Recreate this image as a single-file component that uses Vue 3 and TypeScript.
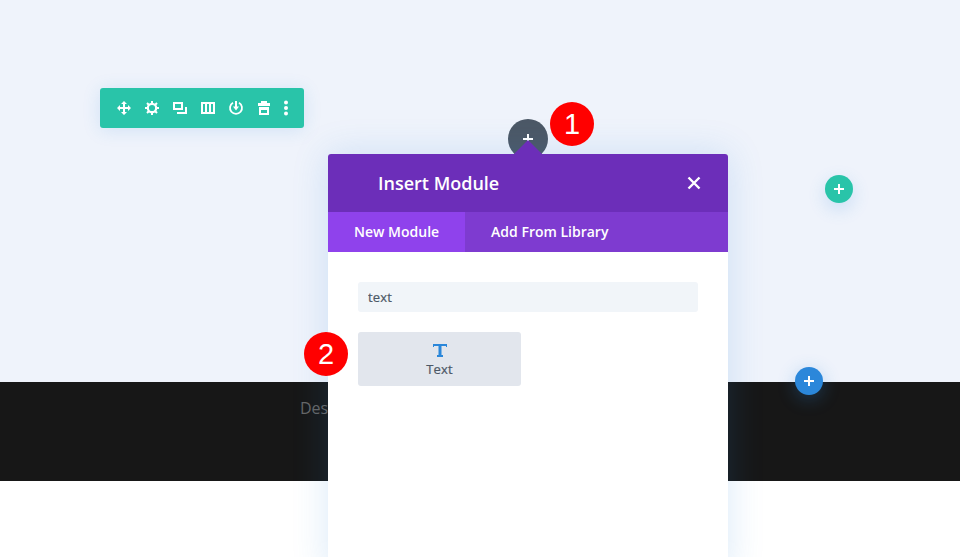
<template>
  <div class="page">
    <section class="hero">
      <div class="toolbar">
        <button class="tool">
          <svg viewBox="0 0 16 16"><path d="M8 1 11 4H9V7H12V5L15 8 12 11V9H9V12H11L8 15 5 12H7V9H4V11L1 8 4 5V7H7V4H5Z" fill="#fff" /></svg>
        </button>
        <button class="tool">
          <svg viewBox="0 0 16 16">
            <circle cx="8" cy="8" r="4.2" fill="none" stroke="#fff" stroke-width="2.2" />
            <path d="M8 1V4M8 12V15M1 8H4M12 8H15M3 3 5 5M11 11 13 13M3 13 5 11M11 5 13 3" stroke="#fff" stroke-width="2" />
          </svg>
        </button>
        <button class="tool">
          <svg viewBox="0 0 16 16"><path d="M2 3H10V9H2ZM14 7V13H5" fill="none" stroke="#fff" stroke-width="2" /></svg>
        </button>
        <button class="tool">
          <svg viewBox="0 0 16 16"><path d="M2 3H14V13H2ZM6 3V13M10 3V13" fill="none" stroke="#fff" stroke-width="2" /></svg>
        </button>
        <button class="tool">
          <svg viewBox="0 0 16 16">
            <path d="M5 2.7A6 6 0 1 0 11 2.7" fill="none" stroke="#fff" stroke-width="1.8" />
            <path d="M7 1H9V6.5H11L8 10.5 5 6.5H7Z" fill="#fff" />
          </svg>
        </button>
        <button class="tool">
          <svg viewBox="0 0 16 16"><path d="M5 3V1H11V3H14V6H2V3ZM3 7H13V15H3ZM5 10V13H11V10Z" fill="#fff" fill-rule="evenodd" /></svg>
        </button>
        <button class="tool tool-more">
          <svg viewBox="0 0 16 16"><circle cx="8" cy="2.5" r="2" fill="#fff" /><circle cx="8" cy="8" r="2" fill="#fff" /><circle cx="8" cy="13.5" r="2" fill="#fff" /></svg>
        </button>
      </div>
    </section>

    <footer class="band">
      <p class="credit">Designed by Elegant Themes | Powered by WordPress</p>
    </footer>

    <button class="add add-dark"><span class="plus"></span></button>
    <button class="add add-green"><span class="plus"></span></button>
    <button class="add add-blue"><span class="plus"></span></button>

    <div class="modal">
      <span class="arrow"></span>
      <header class="modal-head">
        <h2>Insert Module</h2>
        <button class="close" aria-label="Close">
          <svg viewBox="0 0 14 14"><path d="M1.5 1.5 12.5 12.5M12.5 1.5 1.5 12.5" stroke="#fff" stroke-width="2.4" /></svg>
        </button>
      </header>
      <nav class="tabs">
        <button
          v-for="(tab, index) in tabs"
          :key="tab"
          class="tab"
          :class="{ active: activeTab === index }"
          @click="activeTab = index"
        >{{ tab }}</button>
      </nav>
      <div class="modal-body">
        <input v-model="search" class="search" type="text" />
        <div class="modules">
          <button class="module">
            <svg class="module-icon" viewBox="0 0 16 16"><path d="M1 2H15V5H14V4H2V5H1ZM6.5 3H9.5V13H11V15H5V13H6.5Z" fill="#2b87da" /></svg>
            <span>Text</span>
          </button>
        </div>
      </div>
    </div>

    <span class="step step-one">1</span>
    <span class="step step-two">2</span>
  </div>
</template>

<script setup lang="ts">
import { ref } from 'vue'

const tabs = ['New Module', 'Add From Library']
const activeTab = ref(0)
const search = ref('text')
</script>

<style scoped>
.page {
  position: relative;
  height: 557px;
  overflow: hidden;
  background: #fff;
  font-family: "Open Sans", sans-serif;
}

button {
  border: none;
  padding: 0;
  font-family: inherit;
  cursor: pointer;
}

.hero {
  height: 382px;
  padding: 88px 0 0 100px;
  box-sizing: border-box;
  background: #eff3fb;
}

.toolbar {
  display: flex;
  align-items: center;
  width: 204px;
  height: 40px;
  padding-left: 10px;
  box-sizing: border-box;
  background: #29c4a9;
  border-radius: 3px;
  box-shadow: 0 2px 18px rgba(43, 135, 218, 0.15);
}

.tool {
  display: flex;
  align-items: center;
  justify-content: center;
  width: 28px;
  height: 40px;
  background: none;
}

.tool svg {
  width: 16px;
  height: 16px;
}

.tool-more {
  width: 16px;
}

.band {
  height: 99px;
  padding-left: 300px;
  background: #171717;
}

.credit {
  margin: 0;
  padding-top: 15px;
  font-size: 16px;
  line-height: 22px;
  color: #666;
  white-space: nowrap;
}

.add {
  position: absolute;
  display: flex;
  align-items: center;
  justify-content: center;
  width: 28px;
  height: 28px;
  border-radius: 50%;
}

.plus {
  position: relative;
  width: 10px;
  height: 2px;
  background: #fff;
}

.plus::after {
  content: "";
  position: absolute;
  left: 4px;
  top: -4px;
  width: 2px;
  height: 10px;
  background: #fff;
}

.add-dark {
  left: 508px;
  top: 119px;
  width: 40px;
  height: 40px;
  background: #4c5866;
}

.add-green {
  left: 825px;
  top: 175px;
  background: #29c4a9;
  box-shadow: 0 6px 18px rgba(43, 135, 218, 0.2);
}

.add-blue {
  left: 795px;
  top: 367px;
  background: #2b87da;
  box-shadow: 0 4px 18px rgba(43, 135, 218, 0.3);
}

.modal {
  position: absolute;
  left: 328px;
  top: 154px;
  width: 400px;
  height: 420px;
  background: #fff;
  border-radius: 3px 3px 0 0;
  box-shadow: 0 0 36px rgba(43, 135, 218, 0.18);
}

.arrow {
  position: absolute;
  left: 186px;
  top: -14px;
  border-left: 14px solid transparent;
  border-right: 14px solid transparent;
  border-bottom: 14px solid #6c2eb9;
}

.modal-head {
  display: flex;
  align-items: center;
  justify-content: space-between;
  height: 58px;
  padding: 0 27px 0 50px;
  background: #6c2eb9;
  border-radius: 3px 3px 0 0;
}

.modal-head h2 {
  margin: 0;
  font-size: 18px;
  font-weight: 600;
  color: #fff;
}

.close {
  display: flex;
  width: 14px;
  height: 14px;
  background: none;
}

.tabs {
  display: flex;
  height: 40px;
  background: #7e3bd0;
}

.tab {
  padding: 0 26px 2px;
  font-size: 14px;
  font-weight: 600;
  color: #fff;
  background: none;
}

.tab.active {
  background: #8f42ec;
}

.modal-body {
  padding: 30px;
}

.search {
  display: block;
  width: 100%;
  height: 30px;
  padding: 0 10px;
  box-sizing: border-box;
  border: none;
  border-radius: 3px;
  outline: none;
  background: #f1f5f9;
  font-family: inherit;
  font-size: 13px;
  font-weight: 500;
  letter-spacing: 0.2px;
  -webkit-text-stroke: 0.2px #4c5866;
  color: #4c5866;
}

.modules {
  margin-top: 20px;
}

.module {
  display: flex;
  flex-direction: column;
  align-items: center;
  width: 163px;
  height: 54px;
  padding-top: 10px;
  box-sizing: border-box;
  border-radius: 3px;
  background: #e2e6ed;
  font-size: 13px;
  font-weight: 500;
  letter-spacing: 0.2px;
  -webkit-text-stroke: 0.2px #4c5866;
  color: #4c5866;
}

.module-icon {
  width: 16px;
  height: 16px;
  margin-bottom: 2px;
}

.module span {
  line-height: 18px;
}

.step {
  position: absolute;
  width: 44px;
  height: 44px;
  border-radius: 50%;
  background: #f00;
  color: #fff;
  font-family: "Liberation Sans", Arial, sans-serif;
  font-size: 29px;
  line-height: 44px;
  text-align: center;
}

.step-one {
  left: 550px;
  top: 102px;
}

.step-two {
  left: 304px;
  top: 332px;
}
</style>
